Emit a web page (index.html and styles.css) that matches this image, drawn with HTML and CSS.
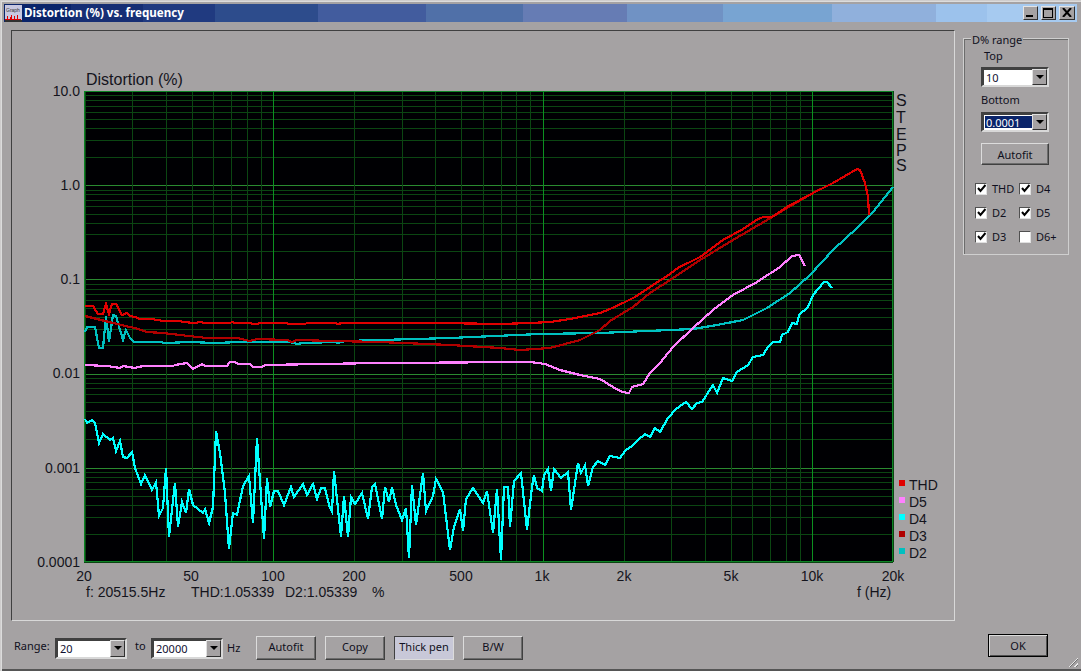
FILE: index.html
```html
<!DOCTYPE html>
<html lang="en">
<head>
  <meta charset="UTF-8">
  <title>Distortion (%) vs. frequency</title>
  <link rel="stylesheet" href="styles.css">
</head>
<body>
  <div class="window">
    <div class="titlebar">
      <svg class="app-icon" width="17" height="17" viewBox="0 0 17 17">
        <rect width="17" height="17" fill="#c8c8e0"/>
        <text x="1" y="7" class="icon-text">Graph</text>
        <path d="M0 14h2v-3h1v3h2v-2h1v-2h1v4h2v-3h1v3h2v-4h1v4h3v3h-17z" fill="#e00000"/>
        <rect y="15" width="17" height="2" fill="#303030"/>
      </svg>
      <span class="title-text">Distortion (%) vs. frequency</span>
      <div class="win-buttons">
        <span class="win-btn"><svg width="9" height="9" viewBox="0 0 9 9"><rect x="0" y="7" width="7" height="2" fill="#000"/></svg></span>
        <span class="win-btn"><svg width="11" height="10" viewBox="0 0 11 10"><path d="M0 0h10v10h-10zM1 2v7h8v-7z" fill="#000" fill-rule="evenodd"/></svg></span>
        <span class="win-btn win-close"><svg width="10" height="9" viewBox="0 0 10 9"><path d="M1 0l8 9M9 0l-8 9" stroke="#000" stroke-width="2" fill="none"/></svg></span>
      </div>
    </div>

    <div class="main">
      <div class="panel">
        <svg id="chart" class="chart" width="942" height="589" viewBox="12 31 942 589">
          <rect x="84" y="91" width="809" height="471" fill="#000003"/>
          <g id="grid"></g>
          <g id="curves"></g>

          <text x="86" y="85" class="t-title">Distortion (%)</text>

          <g class="t-tick t-end">
            <text x="80" y="96">10.0</text>
            <text x="80" y="190">1.0</text>
            <text x="80" y="284">0.1</text>
            <text x="80" y="378">0.01</text>
            <text x="80" y="473">0.001</text>
            <text x="80" y="567">0.0001</text>
          </g>

          <g class="t-tick t-mid">
            <text x="84" y="581">20</text>
            <text x="191" y="581">50</text>
            <text x="273" y="581">100</text>
            <text x="354" y="581">200</text>
            <text x="461" y="581">500</text>
            <text x="542" y="581">1k</text>
            <text x="624" y="581">2k</text>
            <text x="731" y="581">5k</text>
            <text x="812" y="581">10k</text>
            <text x="893" y="581">20k</text>
          </g>

          <g class="t-tick">
            <text x="86" y="597">f: 20515.5Hz</text>
            <text x="191" y="597">THD:1.05339</text>
            <text x="285" y="597">D2:1.05339</text>
            <text x="372" y="597">%</text>
            <text x="857" y="597">f (Hz)</text>
          </g>

          <text class="t-steps">
            <tspan x="896" y="106">S</tspan>
            <tspan x="896" y="123">T</tspan>
            <tspan x="896" y="140">E</tspan>
            <tspan x="896" y="156">P</tspan>
            <tspan x="896" y="171">S</tspan>
          </text>

          <g class="t-tick">
            <rect x="899" y="480" width="6" height="6" fill="#e00000"/>
            <text x="909" y="490">THD</text>
            <rect x="899" y="497" width="6" height="6" fill="#ff80ff"/>
            <text x="909" y="507">D5</text>
            <rect x="899" y="514" width="6" height="6" fill="#00ffff"/>
            <text x="909" y="524">D4</text>
            <rect x="899" y="531" width="6" height="6" fill="#b00000"/>
            <text x="909" y="541">D3</text>
            <rect x="899" y="548" width="6" height="6" fill="#00c0c0"/>
            <text x="909" y="558">D2</text>
          </g>
        </svg>
      </div>

      <div class="group">
        <span class="group-title">D% range</span>
        <div class="field-label top-label">Top</div>
        <div class="combo"><span class="combo-value">10</span><span class="combo-arrow"></span></div>
        <div class="field-label bottom-label">Bottom</div>
        <div class="combo combo-second"><span class="combo-value selected">0.0001</span><span class="combo-arrow"></span></div>
        <button class="btn btn-side">Autofit</button>
        <div class="checks">
          <label class="check"><span class="box"><svg width="9" height="9" viewBox="0 0 9 9"><path d="M1 4l2.500 3l5-6" stroke="#000" stroke-width="2" fill="none"/></svg></span>THD</label>
          <label class="check"><span class="box"><svg width="9" height="9" viewBox="0 0 9 9"><path d="M1 4l2.500 3l5-6" stroke="#000" stroke-width="2" fill="none"/></svg></span>D4</label>
          <label class="check"><span class="box"><svg width="9" height="9" viewBox="0 0 9 9"><path d="M1 4l2.500 3l5-6" stroke="#000" stroke-width="2" fill="none"/></svg></span>D2</label>
          <label class="check"><span class="box"><svg width="9" height="9" viewBox="0 0 9 9"><path d="M1 4l2.500 3l5-6" stroke="#000" stroke-width="2" fill="none"/></svg></span>D5</label>
          <label class="check"><span class="box"><svg width="9" height="9" viewBox="0 0 9 9"><path d="M1 4l2.500 3l5-6" stroke="#000" stroke-width="2" fill="none"/></svg></span>D3</label>
          <label class="check"><span class="box"></span>D6+</label>
        </div>
      </div>
    </div>

    <div class="bottom">
      <span class="range-label">Range:</span>
      <div class="combo combo-range"><span class="combo-value">20</span><span class="combo-arrow"></span></div>
      <span class="to-label">to</span>
      <div class="combo combo-range"><span class="combo-value">20000</span><span class="combo-arrow"></span></div>
      <span class="hz-label">Hz</span>
      <div class="bottom-buttons">
        <button class="btn">Autofit</button>
        <button class="btn">Copy</button>
        <button class="btn btn-down">Thick pen</button>
        <button class="btn">B/W</button>
      </div>
      <button class="btn btn-ok">OK</button>
    </div>
    <div class="grip"></div>
  </div>

  <script src="script.js"></script>
</body>
</html>
```
FILE: styles.css
```css
* {
  box-sizing: border-box;
}
html, body {
  margin: 0;
  padding: 0;
  background-color: #a5a2a3;
}
body {
  font-family: "Noto Sans", Tahoma, sans-serif;
  font-size: 11px;
  color: #101020;
  overflow: hidden;
}
.window {
  position: relative;
  width: 1081px;
  height: 671px;
  padding: 4px;
  background-color: #a5a2a3;
  box-shadow: inset 1px 1px 0 #cfcdcd, inset 2px 2px 0 #dcdcdc, inset 0 -2px 0 #555;
}
.titlebar {
  display: flex;
  align-items: center;
  height: 18px;
  padding-left: 1px;
  color: #fff;
  background: linear-gradient(to right,
    #0a246a 0 67px, #162e74 67px 139px, #203a80 139px 211px, #2d4c8c 211px 314px,
    #425c9e 314px 422px, #5070a8 422px 519px, #667cb4 519px 623px, #7092c4 623px 719px,
    #78a4d2 719px 828px, #90b0dc 828px 932px, #9cc2ec 932px 983px, #a6caf0 983px);
}
.app-icon {
  flex: none;
}
.icon-text {
  font-family: "Liberation Sans", sans-serif;
  font-size: 5px;
  fill: #333;
}
.title-text {
  margin: -2px 0 0 2px;
  font-family: "Noto Sans", Tahoma, sans-serif;
  font-size: 11.600px;
  font-weight: 700;
  white-space: nowrap;
}
.win-buttons {
  display: flex;
  gap: 3px;
  margin-left: auto;
  margin-right: 2px;
  margin-bottom: 1px;
}
.win-btn {
  display: flex;
  align-items: center;
  justify-content: center;
  width: 15px;
  height: 14px;
  background-color: #a5a2a3;
  border: 1px solid;
  border-color: #e4e4e4 #303030 #303030 #e4e4e4;
}
.win-close {
  width: 16px;
}
.main {
  display: flex;
  align-items: flex-start;
  gap: 8px;
  padding: 8px 0 0 7px;
}
.panel {
  flex: none;
  width: 944px;
  height: 591px;
  border: 1px solid;
  border-color: #404040 #d8d8d8 #d8d8d8 #404040;
}
.chart {
  display: block;
}
.chart text {
  font-family: "Liberation Sans", Arial, sans-serif;
  fill: #14141c;
}
.t-title {
  font-size: 16px;
}
.t-tick text {
  font-size: 14px;
}
.t-end text {
  text-anchor: end;
}
.t-mid text {
  text-anchor: middle;
}
.t-steps {
  font-size: 16px;
}
.curve {
  fill: none;
  stroke-width: 2.200;
  shape-rendering: crispEdges;
}
.group {
  position: relative;
  flex: none;
  width: 106px;
  height: 217px;
  margin-top: 8px;
  padding: 10px 0 0 17px;
  border: 1px solid #cfcfcf;
  box-shadow: inset 1px 1px 0 #6c6c6c;
}
.group-title {
  position: absolute;
  left: 7px;
  top: -6px;
  padding: 0 1px;
  line-height: 13px;
  white-space: nowrap;
  background-color: #a5a2a3;
}
.field-label {
  height: 13px;
  line-height: 13px;
}
.top-label {
  margin-left: 3px;
}
.bottom-label {
  margin-top: 6px;
}
.combo {
  display: flex;
  width: 68px;
  height: 20px;
  margin-top: 5px;
  padding: 2px;
  background-color: #fff;
  border: 2px solid;
  border-color: #404040 #d8d8d8 #d8d8d8 #404040;
  box-shadow: inset 1px 1px 0 #404040;
}
.combo-second {
  margin-top: 6px;
}
.combo-value {
  flex: 1;
  padding-left: 1px;
  line-height: 13px;
  color: #101030;
}
.combo-value.selected {
  color: #fff;
  background-color: #0a246a;
}
.combo-arrow {
  position: relative;
  flex: none;
  width: 15px;
  margin: -2px -2px -2px 0;
  background-color: #a5a2a3;
  border: 1px solid;
  border-color: #e0e0e0 #303030 #303030 #e0e0e0;
}
.combo-arrow::after {
  content: "";
  position: absolute;
  left: 3px;
  top: 5px;
  border-left: 4px solid transparent;
  border-right: 4px solid transparent;
  border-top: 4px solid #000;
}
.btn {
  padding: 0;
  font-family: "Noto Sans", Tahoma, sans-serif;
  font-size: 11px;
  color: #101020;
  background-color: #a5a2a3;
  border: 1px solid;
  border-color: #dcdcdc #404040 #404040 #dcdcdc;
  box-shadow: inset -1px -1px 0 #6c6c6c;
}
.btn-side {
  display: block;
  width: 68px;
  height: 22px;
  margin-top: 11px;
}
.btn-down {
  background-color: #c8c8d8;
  border-color: #404040 #dcdcdc #dcdcdc #404040;
  box-shadow: none;
}
.checks {
  display: grid;
  grid-template-columns: 44px 44px;
  grid-auto-rows: 13px;
  row-gap: 11px;
  margin: 17px 0 0 -6px;
}
.check {
  display: flex;
  align-items: center;
  gap: 5px;
  white-space: nowrap;
}
.box {
  display: flex;
  align-items: center;
  justify-content: center;
  width: 12px;
  height: 12px;
  background-color: #fff;
  border: 1px solid;
  border-color: #505050 #e0e0e0 #e0e0e0 #505050;
}
.bottom {
  display: flex;
  align-items: flex-start;
  padding: 13px 0 0 10px;
}
.range-label {
  margin: 5px 8px 0 0;
  line-height: 14px;
  width: 33px;
}
.combo-range {
  width: 72px;
  height: 21px;
  margin-top: 4px;
}
.to-label {
  width: 9px;
  margin: 5px 7px 0 8px;
  line-height: 14px;
}
.hz-label {
  margin: 7px 17px 0 4px;
  width: 12px;
  line-height: 14px;
}
.bottom-buttons {
  display: flex;
  gap: 9px;
  margin-top: 2px;
}
.bottom-buttons .btn {
  width: 60px;
  height: 24px;
  padding-bottom: 4px;
}
.btn-ok {
  width: 60px;
  height: 23px;
  margin-left: 465px;
  padding-bottom: 1px;
  border: 1px solid #000;
  box-shadow: inset 1px 1px 0 #dcdcdc, inset -1px -1px 0 #505050;
}
.grip {
  position: absolute;
  right: 3px;
  bottom: 4px;
  width: 12px;
  height: 12px;
  background: repeating-linear-gradient(135deg, transparent 0 2px, #e8e8e8 2px 3px, #707070 3px 4px);
  clip-path: polygon(100% 0, 100% 100%, 0 100%);
}
```
FILE: script.js
```javascript
// plot area in window pixels
var X0 = 84.5, XDEC = 269.6, Y0 = 91, YDEC = 94.2;
var NS = 'http://www.w3.org/2000/svg';

var thd = [85,306, 93,306, 98,314, 103,314, 106,304, 109,314, 112,304, 116,304, 122,315, 127,313, 130,316, 135,317, 140,319,
  152,319, 163,321, 180,321, 183,322, 195,323, 200,322, 205,323, 230,323, 232,322, 235,323, 250,323, 253,324, 257,324, 260,323,
  287,323, 288,324, 305,324, 307,323, 335,323, 338,324, 342,323, 380,323, 440,323, 500,324, 530,323, 550,322, 570,319, 585,316,
  600,313, 610,309, 623,303, 635,297, 650,287, 670,274, 678,268, 700,257, 723,240, 743,229, 755,221, 763,217, 772,217,
  787,207, 813,193, 833,183, 857,169, 860,170, 865,183, 868,197, 869,215];

var d3 = [85,316, 97,319, 113,323, 130,327, 135,328, 147,332, 163,333, 180,335, 207,338, 237,338, 250,341, 257,339, 287,340,
  292,342, 297,340, 333,341, 380,342, 450,345, 500,348, 520,350, 550,348, 580,340, 600,330, 610,321, 633,307, 650,293,
  670,280, 700,260, 733,240, 767,220, 787,208, 813,193, 833,183, 857,169, 860,170, 865,183, 868,197, 869,215];

var d2 = [85,332, 87,327, 95,327, 99,348, 103,348, 106,316, 109,342, 113,315, 116,316, 123,340, 126,330, 130,338, 134,342,
  160,342, 165,343, 190,342, 215,343, 240,342, 290,342, 297,344, 303,343, 335,342, 338,343, 345,341, 380,340, 450,338,
  540,334, 600,333, 647,331, 693,329, 717,325, 743,320, 767,308, 790,293, 810,275, 833,250, 857,228, 873,212, 893,187];

var d5 = [85,365, 107,366, 120,368, 123,366, 135,368, 143,366, 173,366, 175,365, 187,363, 193,369, 202,364, 205,366,
  227,366, 230,362, 235,362, 238,364, 250,364, 253,367, 262,367, 265,365, 320,364, 380,363, 530,362, 545,364, 560,370,
  580,375, 600,379, 613,387, 622,392, 629,393, 632,387, 643,384, 650,373, 660,363, 673,347, 693,328, 713,310, 733,295,
  757,282, 780,267, 792,256, 799,255, 805,266];

var d4 = [85,419, 87,423, 92,420, 95,423, 99,443, 103,434, 110,440, 113,438, 116,451, 120,441, 123,457, 127,458, 132,452,
  135,468, 141,484, 145,475, 152,490, 156,482, 159,516, 163,508, 166,468, 169,537, 175,483, 178,527, 182,502, 186,513,
  189,489, 193,505, 203,513, 205,509, 209,523, 213,507, 216,431, 220,453, 225,493, 229,549, 233,513, 237,515, 243,486,
  249,476, 253,523, 257,438, 264,539, 267,478, 270,507, 274,491, 278,491, 284,505, 291,487, 294,497, 303,484, 307,495,
  313,484, 317,499, 321,488, 325,488, 330,508, 332,512, 334,471, 341,537, 344,496, 348,537, 351,497, 355,504, 362,493,
  368,519, 372,487, 375,484, 382,519, 385,487, 389,502, 392,487, 396,505, 402,520, 406,508, 409,558, 412,485, 416,525,
  423,473, 426,511, 433,496, 436,479, 443,492, 450,550, 454,527, 460,509, 463,531, 466,499, 473,488, 483,503, 487,491,
  493,533, 497,489, 501,560, 504,487, 508,487, 510,527, 514,481, 521,473, 527,530, 532,487, 534,475, 537,488, 542,491,
  544,475, 548,469, 551,491, 554,469, 561,478, 568,472, 571,510, 578,463, 581,473, 585,465, 588,486, 593,467, 598,461,
  605,465, 610,456, 620,458, 626,450, 632,446, 638,440, 645,434, 650,437, 655,428, 660,432, 668,418, 676,409, 686,402,
  692,409, 697,403, 702,402, 713,385, 717,393, 723,378, 732,381, 737,372, 748,365, 753,357, 763,355, 768,347, 773,342,
  780,342, 782,335, 788,332, 792,323, 797,324, 799,315, 808,307, 813,295, 824,282, 827,282, 832,288];

function add(parent, tag, attrs) {
  var el = document.createElementNS(NS, tag);
  for (var k in attrs) el.setAttribute(k, attrs[k]);
  parent.appendChild(el);
  return el;
}

function drawGrid() {
  var grid = document.getElementById('grid');
  var minor = '#0b4612', major = '#0c9020', edge = '#0c8424';

  // horizontal lines, 5 decades with 9 steps each
  for (var d = 0; d < 5; d++) {
    for (var m = 1; m <= 9; m++) {
      var y = Math.round(Y0 + (d + 1) * YDEC - Math.log10(m) * YDEC) + 0.5;
      add(grid, 'line', { x1: 84, x2: 893, y1: y, y2: y, stroke: m == 1 && d < 4 ? '#2a8a30' : minor, 'shape-rendering': 'crispEdges' });
    }
  }

  // vertical lines from 20 Hz up to 20 kHz
  for (var p = 10; p <= 10000; p *= 10) {
    for (var n = 1; n <= 9; n++) {
      var f = p * n;
      if (f < 20 || f > 20000) continue;
      var x = Math.round(X0 + Math.log10(f / 20) * XDEC) + 0.5;
      add(grid, 'line', { x1: x, x2: x, y1: 91, y2: 562, stroke: n == 1 ? major : minor, 'shape-rendering': 'crispEdges' });
    }
  }

  add(grid, 'rect', { x: 84.5, y: 91.5, width: 808, height: 470, fill: 'none', stroke: edge, 'shape-rendering': 'crispEdges' });
}

function drawCurve(points, color) {
  var s = '';
  for (var i = 0; i < points.length; i += 2) s += points[i] + ',' + points[i + 1] + ' ';
  add(document.getElementById('curves'), 'polyline', { points: s, stroke: color, 'class': 'curve' });
}

drawGrid();
drawCurve(d2, '#00c0c0');
drawCurve(d3, '#b00000');
drawCurve(d4, '#00ffff');
drawCurve(d5, '#ff80ff');
drawCurve(thd, '#e00000');
```
